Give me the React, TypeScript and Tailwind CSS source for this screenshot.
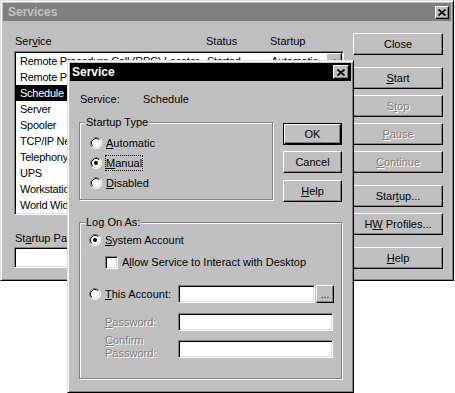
import React from 'react';
import clsx from 'clsx';

const raised =
  'border border-t-white border-l-white border-r-black border-b-black shadow-[inset_-1px_-1px_0_#808080]';
const sunken =
  'border border-t-[#808080] border-l-[#808080] border-r-white border-b-white shadow-[inset_1px_1px_0_#000,inset_-1px_-1px_0_#dfdfdf]';
const frame =
  'border border-t-[#dfdfdf] border-l-[#dfdfdf] border-r-black border-b-black bg-[#c0c0c0] p-[2px] shadow-[inset_1px_1px_0_#fff,inset_-1px_-1px_0_#808080]';
const grayText = 'text-[#808080] [text-shadow:1px_1px_0_#fff]';

const SERVICES = [
  ['Remote Procedure Call (RPC) Locator', 'Started', 'Automatic'],
  ['Remote Procedure Call (RPC) Service', 'Started', 'Manual'],
  ['Schedule', '', 'Manual'],
  ['Server', 'Started', 'Automatic'],
  ['Spooler', 'Started', 'Automatic'],
  ['TCP/IP NetBIOS Helper', 'Started', 'Automatic'],
  ['Telephony Service', '', 'Manual'],
  ['UPS', '', 'Manual'],
  ['Workstation', 'Started', 'Automatic'],
  ['World Wide Web Publishing', 'Started', 'Automatic'],
];

function Btn({
  children,
  disabled,
  isDefault,
  className,
}: {
  children: React.ReactNode;
  disabled?: boolean;
  isDefault?: boolean;
  className?: string;
}) {
  return (
    <div className={clsx('flex shrink-0 bg-[#c0c0c0]', isDefault && 'border border-black', className)}>
      <div className={clsx('flex flex-1 items-center justify-center leading-none', raised, disabled && grayText)}>
        <span>{children}</span>
      </div>
    </div>
  );
}

function XButton({ className }: { className?: string }) {
  return (
    <div className={clsx('flex items-center justify-center bg-[#c0c0c0]', raised, className)}>
      <svg width="8" height="7" viewBox="0 0 8 7">
        <path d="M0.5 0.5L7.5 6.5M7.5 0.5L0.5 6.5" stroke="#000" strokeWidth="1.7" />
      </svg>
    </div>
  );
}

function Radio({ checked }: { checked?: boolean }) {
  return (
    <svg width="12" height="12" viewBox="0 0 12 12" className="shrink-0">
      <circle cx="6" cy="6" r="5" fill="#fff" />
      <path d="M2.11 9.89A5.5 5.5 0 0 1 9.89 2.11" stroke="#808080" fill="none" />
      <path d="M9.89 2.11A5.5 5.5 0 0 1 2.11 9.89" stroke="#fff" fill="none" />
      <path d="M2.82 9.18A4.5 4.5 0 0 1 9.18 2.82" stroke="#000" fill="none" />
      <path d="M9.18 2.82A4.5 4.5 0 0 1 2.82 9.18" stroke="#dfdfdf" fill="none" />
      {checked && <circle cx="6" cy="6" r="2" fill="#000" />}
    </svg>
  );
}

function GroupBox({ label, className, children }: { label: string; className?: string; children: React.ReactNode }) {
  return (
    <div
      className={clsx(
        'relative shrink-0 border border-[#808080] shadow-[inset_1px_1px_0_#fff,1px_1px_0_#fff]',
        className
      )}
    >
      <span className="absolute -top-[8px] left-[5px] bg-[#c0c0c0] px-[1px] leading-[14px]">{label}</span>
      {children}
    </div>
  );
}

function RadioRow({ checked, focused, children }: { checked?: boolean; focused?: boolean; children: React.ReactNode }) {
  return (
    <div className="flex h-[20px] items-center gap-[3px]">
      <Radio checked={checked} />
      <span
        className={clsx(
          'border leading-[14px]',
          focused ? 'border-dotted border-black' : 'border-transparent'
        )}
      >
        {children}
      </span>
    </div>
  );
}

export default function App() {
  return (
    <div className="relative h-[393px] w-[455px] overflow-hidden bg-white font-['Liberation_Sans',Arial,sans-serif] text-[11px] text-black">
      {/* Services window */}
      <div className={clsx('flex h-[281px] w-[454px] flex-col', frame)}>
        <div className="flex h-[18px] items-center bg-[#808080] pl-[5px] pr-[2px]">
          <span className="text-[12px] font-bold text-[#c0c0c0]">Services</span>
          <XButton className="ml-auto h-[13px] w-[14px]" />
        </div>

        <div className="flex flex-1 pl-[11px]">
          {/* list side */}
          <div className="flex w-[330px] flex-col pt-[13px]">
            <div className="flex h-[14px] leading-[14px]">
              <span className="w-[192px] pl-[1px]">
                Ser<u>v</u>ice
              </span>
              <span className="w-[64px]">Status</span>
              <span>Startup</span>
            </div>
            <div className={clsx('mt-[3px] flex h-[164px] bg-white p-[1px]', sunken)}>
              <div className="flex flex-1 flex-col">
                {SERVICES.map(([name, status, startup]) => (
                  <div
                    key={name}
                    className={clsx(
                      'flex h-[16px] items-center whitespace-nowrap pl-[4px] leading-[16px] tracking-[-0.25px]',
                      name === 'Schedule' && 'bg-black text-white'
                    )}
                  >
                    <span className="w-[187px] shrink-0">{name}</span>
                    <span className="w-[64px] shrink-0">{status}</span>
                    <span>{startup}</span>
                  </div>
                ))}
              </div>
              <div className="flex w-[16px] flex-col bg-[#dfdfdf]">
                <div className={clsx('flex h-[16px] items-center justify-center bg-[#c0c0c0]', raised)}>
                  <svg width="7" height="4" viewBox="0 0 7 4">
                    <path d="M3.5 0L7 4H0Z" fill="#000" />
                  </svg>
                </div>
                <div className="flex-1" />
                <div className={clsx('flex h-[16px] items-center justify-center bg-[#c0c0c0]', raised)}>
                  <svg width="7" height="4" viewBox="0 0 7 4">
                    <path d="M0 0H7L3.5 4Z" fill="#000" />
                  </svg>
                </div>
              </div>
            </div>
            <div className="mt-[16px] pl-[1px] leading-[14px]">
              St<u>a</u>rtup Parameters:
            </div>
            <div className={clsx('mt-[2px] h-[21px] w-[329px] bg-white', sunken)} />
          </div>

          {/* buttons */}
          <div className="ml-[9px] flex w-[90px] flex-col pt-[12px]">
            <Btn className="h-[22px]">Close</Btn>
            <Btn className="mt-[12px] h-[22px]">
              <u>S</u>tart
            </Btn>
            <Btn disabled className="mt-[6px] h-[22px]">
              S<u>t</u>op
            </Btn>
            <Btn disabled className="mt-[6px] h-[22px]">
              <u>P</u>ause
            </Btn>
            <Btn disabled className="mt-[6px] h-[22px]">
              <u>C</u>ontinue
            </Btn>
            <Btn className="mt-[12px] h-[22px]">
              Star<u>t</u>up...
            </Btn>
            <Btn className="mt-[6px] h-[22px]">
              H<u>W</u> Profiles...
            </Btn>
            <Btn className="mt-[12px] h-[22px]">
              <u>H</u>elp
            </Btn>
          </div>
        </div>
      </div>

      {/* Service dialog */}
      <div className={clsx('absolute left-[67px] top-[60px] flex h-[333px] w-[287px] flex-col', frame)}>
        <div className="flex h-[18px] items-center bg-black pl-[2px] pr-[2px]">
          <span className="text-[12px] font-bold text-white">Service</span>
          <XButton className="ml-auto h-[14px] w-[16px]" />
        </div>

        <div className="flex flex-col px-[9px] pt-[11px]">
          <div className="flex h-[14px] pl-[1px] leading-[14px]">
            <span className="w-[63px]">Service:</span>
            <span>Schedule</span>
          </div>

          <div className="mt-[16px] flex items-start">
            <GroupBox label="Startup Type" className="h-[78px] w-[194px] pl-[10px] pt-[10px]">
              <RadioRow>
                <u>A</u>utomatic
              </RadioRow>
              <RadioRow checked focused>
                <u>M</u>anual
              </RadioRow>
              <RadioRow>
                <u>D</u>isabled
              </RadioRow>
            </GroupBox>
            <div className="ml-[10px] mt-[1px] flex w-[59px] flex-col">
              <Btn isDefault className="h-[22px]">
                OK
              </Btn>
              <Btn className="mt-[6px] h-[22px]">Cancel</Btn>
              <Btn className="mt-[7px] h-[22px]">
                <u>H</u>elp
              </Btn>
            </div>
          </div>

          <GroupBox label="Log On As:" className="mt-[20px] h-[157px] w-[263px] pl-[9px] pt-[7px]">
            <RadioRow checked>
              <u>S</u>ystem Account
            </RadioRow>
            <div className="mt-[2px] flex h-[20px] items-center">
              <div className={clsx('ml-[16px] h-[13px] w-[13px] bg-white', sunken)} />
              <span className="ml-[4px]">
                A<u>l</u>low Service to Interact with Desktop
              </span>
            </div>
            <div className="mt-[13px] flex h-[18px] items-center">
              <div className="flex w-[89px] items-center gap-[3px]">
                <Radio />
                <span className="border border-transparent leading-[14px]">
                  <u>T</u>his Account:
                </span>
              </div>
              <div className={clsx('h-[18px] w-[137px] bg-white', sunken)} />
              <Btn className="ml-[1px] h-[18px] w-[18px]">
                <span className="text-[10px]">...</span>
              </Btn>
            </div>
            <div className="mt-[10px] flex h-[18px] items-center">
              <span className={clsx('w-[89px] pl-[16px]', grayText)}>
                <u>P</u>assword:
              </span>
              <div className={clsx('h-[18px] w-[155px] bg-white', sunken)} />
            </div>
            <div className="mt-[3px] flex items-start">
              <span className={clsx('w-[89px] pl-[16px] leading-[13px]', grayText)}>
                <u>C</u>onfirm
                <br />
                Password:
              </span>
              <div className={clsx('mt-[6px] h-[18px] w-[155px] bg-white', sunken)} />
            </div>
          </GroupBox>
        </div>
      </div>
    </div>
  );
}
